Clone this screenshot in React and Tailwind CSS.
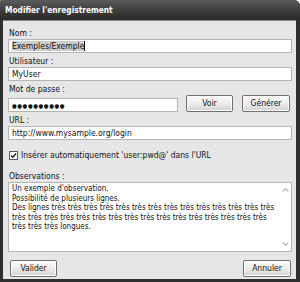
import React from "react";

const font = { fontFamily: '"DejaVu Sans Condensed", "DejaVu Sans", sans-serif' };

const tres = (n) => Array(n).fill("très").join(" ");

function Field({ label, children }) {
  return (
    <div className="flex flex-col">
      <div className="h-[10px] leading-[10px] text-[8.5px] text-[#111] pl-[1px]">{label}</div>
      <div className="mt-[1px]">{children}</div>
    </div>
  );
}

function Input({ children, className = "" }) {
  return (
    <div
      className={
        "h-[14px] bg-white border border-[#b4b4b4] flex items-center pl-[3px] text-[8.5px] text-[#111] " +
        className
      }
    >
      {children}
    </div>
  );
}

function Btn({ children, className = "" }) {
  return (
    <div
      className={
        "h-[17px] flex items-center justify-center rounded-[2px] border border-[#6f6f6f] bg-gradient-to-b from-[#fbfbfb] via-[#ececec] to-[#d2d2d2] text-[8.5px] text-[#111] shadow-[inset_0_0_0_1px_#ffffff] " +
        className
      }
    >
      {children}
    </div>
  );
}

export default function App() {
  return (
    <div
      className="w-[300px] h-[282px] bg-[#2f2f2f] flex flex-col rounded-tr-[6px] rounded-tl-[2px] overflow-hidden"
      style={font}
    >
      {/* barre de titre */}
      <div className="h-[20px] shrink-0 flex items-center pl-[5px] bg-gradient-to-b from-[#5c5c5c] via-[#3e3e3e] to-[#2a2a2a] text-white font-bold text-[8.3px]">
        Modifier l'enregistrement
      </div>

      <div className="flex-1 ml-[3px] mr-[4px] mb-[3px] bg-[#e6e6e6] border-t border-[#8a8a8a] pl-[5px] pr-[4px] pt-[7px] flex flex-col">
        <Field label="Nom :">
          <Input>
            <span className="bg-[#cdcdcd] leading-[10px]">Exemples/Exemple</span>
            <span className="w-[1px] h-[10px] bg-black" />
          </Input>
        </Field>

        <div className="mt-[3px]">
          <Field label="Utilisateur :">
            <Input>MyUser</Input>
          </Field>
        </div>

        <div className="mt-[3px]">
          <Field label="Mot de passe :">
            <div className="flex items-end">
              <Input className="w-[170px] !text-[6px] tracking-[0.6px]">●●●●●●●●●●</Input>
              <Btn className="ml-[8px] w-[47px]">Voir</Btn>
              <Btn className="ml-[9px] w-[48px]">Générer</Btn>
            </div>
          </Field>
        </div>

        <div className="mt-[3px]">
          <Field label="URL :">
            <Input>http://www.mysample.org/login</Input>
          </Field>
        </div>

        <div className="mt-[10px] flex items-center h-[10px]">
          <div className="w-[9px] h-[9px] ml-[1px] border border-[#5a5a5a] bg-white flex items-center justify-center">
            <svg width="7" height="7" viewBox="0 0 7 7">
              <path d="M1 3.5 L2.8 5.3 L6 1.5" fill="none" stroke="#222" strokeWidth="1.4" />
            </svg>
          </div>
          <span className="ml-[3px] text-[8.5px] text-[#111]">
            Insérer automatiquement 'user:pwd@' dans l'URL
          </span>
        </div>

        <div className="mt-[11px]">
          <Field label="Observations :">
            <div className="h-[70px] bg-white border border-[#b4b4b4] flex">
              <div className="flex-1 min-w-0 whitespace-nowrap pl-[3px] pt-[1px] text-[8px] leading-[9.5px] text-[#111]">
                Un exemple d'observation.
                <br />
                Possibilité de plusieurs lignes.
                <br />
                {"Des lignes " + tres(14)}
                <br />
                {tres(16)}
                <br />
                très très très longues.
              </div>
              <div className="w-[12px] shrink-0 flex flex-col justify-between items-center py-[5px]">
                <svg width="7" height="4" viewBox="0 0 7 4">
                  <path d="M0.5 3.5 L3.5 0.8 L6.5 3.5" fill="none" stroke="#a9b4c4" strokeWidth="1.2" />
                </svg>
                <svg width="7" height="4" viewBox="0 0 7 4">
                  <path d="M0.5 0.5 L3.5 3.2 L6.5 0.5" fill="none" stroke="#a9b4c4" strokeWidth="1.2" />
                </svg>
              </div>
            </div>
          </Field>
        </div>

        <div className="mt-[8px] flex justify-between px-[2px]">
          <Btn className="w-[47px]">Valider</Btn>
          <Btn className="w-[48px] mr-[-1px]">Annuler</Btn>
        </div>
      </div>
    </div>
  );
}
